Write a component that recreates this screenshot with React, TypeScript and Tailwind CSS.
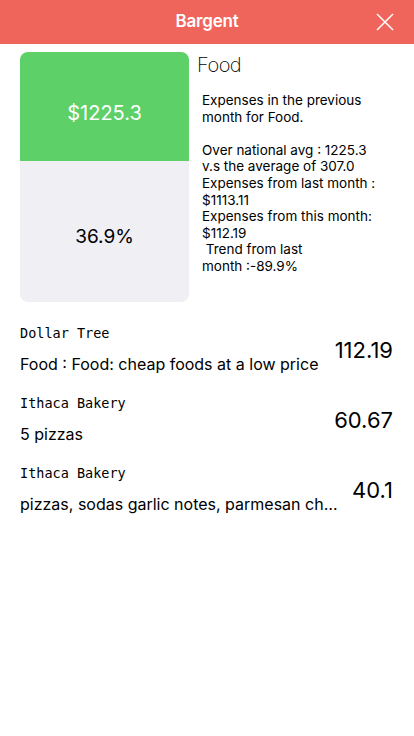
import React from "react";

const sans = { fontFamily: 'Inter, "Liberation Sans", Arial, sans-serif' };

const rows = [
  { store: "Dollar Tree", desc: "Food : Food: cheap foods at a low price", amt: "112.19" },
  { store: "Ithaca Bakery", desc: "5 pizzas", amt: "60.67" },
  { store: "Ithaca Bakery", desc: "pizzas, sodas garlic notes, parmesan cheese", amt: "40.1" },
];

export default function App() {
  return (
    <div className="w-[414px] h-[736px] bg-white text-black" style={sans}>
      <div className="h-[44px] bg-[#ef645b] flex items-center justify-center relative">
        <span className="text-white text-[17px] font-semibold tracking-[-0.2px]">Bargent</span>
        <svg className="absolute right-[20px] top-[13px]" width="18" height="18" viewBox="0 0 18 18">
          <path d="M1 1 L17 17 M17 1 L1 17" stroke="white" strokeWidth="1.5" fill="none" />
        </svg>
      </div>
      <div className="flex pt-[8px] pl-[20px]">
        <div className="w-[169px] h-[250px] rounded-[8px] overflow-hidden flex flex-col shrink-0">
          <div className="h-[109px] bg-[#5dd068] flex items-center justify-center pt-[12px]">
            <span className="text-white text-[20px]">$1225.3</span>
          </div>
          <div className="flex-1 bg-[#efeff4] flex items-center justify-center pt-[12px]">
            <span className="text-[19px]">36.9%</span>
          </div>
        </div>
        <div className="pl-[8px] flex flex-col">
          <div className="text-[20px] font-extralight leading-[26px] tracking-[-0.5px]">Food</div>
          <div className="pl-[5px] mt-[14px] text-[13.5px] leading-[16.6px] w-[205px]">
            <div>Expenses in the previous</div>
            <div>month for Food.</div>
            <div>&nbsp;</div>
            <div>Over national avg : 1225.3</div>
            <div>v.s the average of 307.0</div>
            <div>Expenses from last month :</div>
            <div>$1113.11</div>
            <div>Expenses from this month:</div>
            <div>$112.19</div>
            <div>&nbsp;Trend from last</div>
            <div>month :-89.9%</div>
          </div>
        </div>
      </div>
      <div className="mt-[12px] flex flex-col">
        {rows.map((r, i) => (
          <div key={i} className="h-[70px] flex items-center pl-[20px] pr-[21px]">
            <div className="flex-1 min-w-0 flex flex-col">
              <div className="text-[13.5px] leading-[18px]" style={{ fontFamily: '"DejaVu Sans Mono", monospace' }}>{r.store}</div>
              <div className="mt-[12px] text-[16px] leading-[20px] truncate pr-[12px]">{r.desc}</div>
            </div>
            <div className="text-[22px] shrink-0 mt-[2px]">{r.amt}</div>
          </div>
        ))}
      </div>
    </div>
  );
}
